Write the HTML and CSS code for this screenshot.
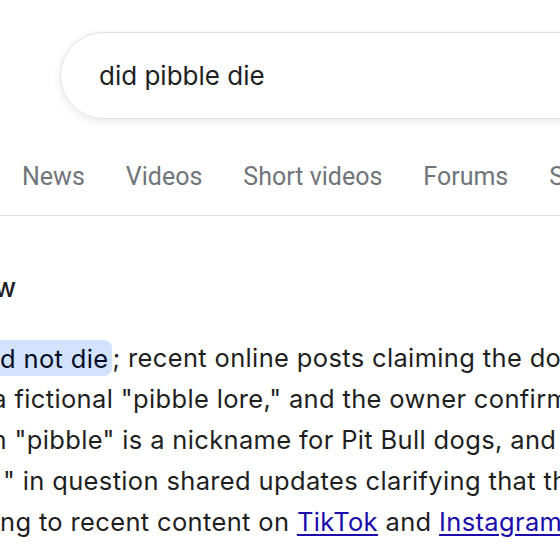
FILE: index.html
```html
<!DOCTYPE html>
<html>
<head>
<meta charset="utf-8">
<link rel="stylesheet" href="styles.css">
</head>
<body>
<div class="page">
  <div class="top">
    <div class="search">did pibble die</div>
  </div>
  <nav class="tabs">
    <span class="tab">News</span>
    <span class="tab">Videos</span>
    <span class="tab">Short videos</span>
    <span class="tab">Forums</span>
    <span class="tab">Shopping</span>
  </nav>
  <div class="overview">
    <div class="heading"><span>AI Overview</span></div>
    <div class="answer">
      <div class="line"><span class="pre"><span>No, Pibble di</span></span><span class="rest"><mark class="hl">d not die</mark>; recent online posts claiming the dog died</span></div>
      <div class="line"><span class="pre w7"><span>were part of a</span></span><span class="rest"> fictional "pibble lore," and the owner confirmed</span></div>
      <div class="line"><span class="pre w7"><span>The term</span></span><span class="rest"> "pibble" is a nickname for Pit Bull dogs, and</span></div>
      <div class="line"><span class="pre gap"><span>the "pibble</span></span><span class="rest">" in question shared updates clarifying that the</span></div>
      <div class="line"><span class="pre"><span>accordi</span></span><span class="rest">ng to recent content on <a href="#">TikTok</a> and <a href="#">Instagram</a>.</span></div>
    </div>
  </div>
</div>
</body>
</html>
```
FILE: styles.css
```css
html, body {
  margin: 0;
  padding: 0;
  overflow: hidden;
  background: #ffffff;
}
body {
  width: 560px;
  height: 560px;
  font-family: "Inter", "Roboto", sans-serif;
  color: #1f1f1f;
}
.page {
  width: 560px;
  overflow: hidden;
}
.top {
  padding: 32px 0 0 60px;
}
.search {
  box-sizing: border-box;
  width: 720px;
  height: 87px;
  border: 1px solid #dfe1e5;
  border-radius: 44px;
  box-shadow: 0 2px 8px rgba(32, 33, 36, 0.10);
  display: flex;
  align-items: center;
  padding-left: 38px;
  font-size: 26px;
  color: #1f1f1f;
  white-space: nowrap;
}
.tabs {
  display: flex;
  gap: 41px;
  padding: 43px 0 23px 22px;
  border-bottom: 1px solid #dadce0;
  white-space: nowrap;
  width: 800px;
}
.tab {
  font-family: "Roboto", "Liberation Sans", sans-serif;
  font-size: 25px;
  line-height: 30px;
  color: #70757a;
}
.overview {
  padding-top: 57px;
}
.heading {
  width: 16px;
  display: flex;
  justify-content: flex-end;
  white-space: nowrap;
  font-size: 26px;
  line-height: 30px;
  font-weight: 500;
  color: #1f1f1f;
}
.answer {
  padding-top: 34px;
  font-size: 25.5px;
  letter-spacing: 0.35px;
  line-height: 41px;
  color: #1f1f1f;
}
.line {
  display: flex;
  white-space: nowrap;
}
.pre {
  width: 0;
  display: flex;
  justify-content: flex-end;
  flex-shrink: 0;
}
.pre.w7 { width: 7px; }
.pre.gap { padding-right: 3px; }
.rest {
  white-space: pre;
}
.hl {
  background: #d3e3fd;
  color: #040c28;
  padding: 2.5px 4px 2.5px 0;
  border-radius: 0 8px 8px 0;
}
a {
  color: #1a0dab;
  text-decoration: underline;
  text-decoration-thickness: 1.5px;
  text-underline-offset: 2.5px;
}
```
